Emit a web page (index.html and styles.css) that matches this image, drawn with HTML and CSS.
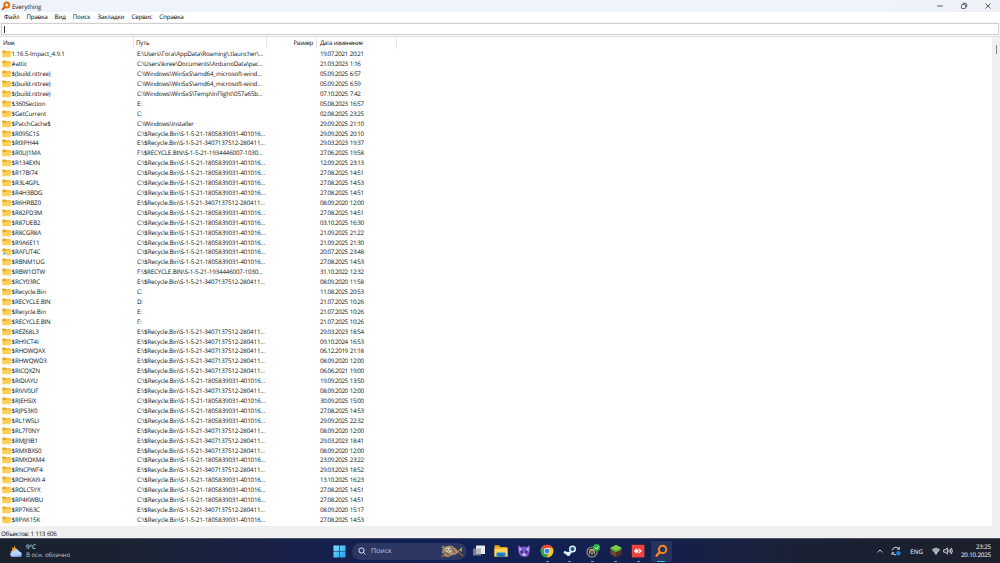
FILE: index.html
```
<!DOCTYPE html>
<html lang="ru">
<head>
    <meta charset="utf-8" />
    <title>Everything</title>
    <meta name="viewport" content="width=device-width, initial-scale=1">
    <link rel="stylesheet" href="styles.css">
</head>
<body>
    <div class="titlebar">
        <svg class="app-icon" viewBox="0 0 20 20">
            <circle cx="11.500" cy="8" r="5" fill="none" stroke="#e8700f" stroke-width="4" />
            <path d="M7.500 12L3.500 16.500" stroke="#d95f0c" stroke-width="4.200" stroke-linecap="round" />
        </svg>
        <span class="title">Everything</span>
        <svg class="window-button" viewBox="0 0 8 8"><path d="M1.200 4H6.800" /></svg>
        <svg class="window-button" viewBox="0 0 8 8"><rect x="1.500" y="2.500" width="4" height="4" rx=".8" /><path d="M2.800 1.300H5.500Q6.700 1.300 6.700 2.500V5.200" /></svg>
        <svg class="window-button" viewBox="0 0 8 8"><path d="M1.500 1.500L6.500 6.500M6.500 1.500L1.500 6.500" /></svg>
    </div>
    <div class="menu">
        <span>Файл</span>
        <span>Правка</span>
        <span>Вид</span>
        <span>Поиск</span>
        <span>Закладки</span>
        <span>Сервис</span>
        <span>Справка</span>
    </div>
    <div class="search-row">
        <div class="search-input"><i class="caret"></i></div>
    </div>

    <div class="content">
        <div class="list">
            <div class="row head">
                <div class="name">Имя</div>
                <div class="path">Путь</div>
                <div class="size">Размер</div>
                <div class="date">Дата изменения</div>
            </div>
            <div class="rows"></div>
        </div>
        <div class="scrollbar"><div class="thumb"></div></div>
    </div>
    <div class="status">Объектов: 1 113 606</div>

    <div class="taskbar">
        <div class="weather">
            <svg class="weather-icon" viewBox="0 0 14 14">
                <path d="M5.500 1L6.500 4L9 6L4 9L1.500 7.500L3.500 6L2.500 3.500L5 4Z" fill="#f39a2b" />
                <path d="M3.600 13a2.700 2.700 0 0 1-.4-5.300A3.800 3.800 0 0 1 10.300 7.500A2.800 2.800 0 0 1 10.600 13Z" fill="#b5d2f8" />
                <path d="M1.500 11.500Q6 12.500 13 10.500Q12.500 13 10.600 13H3.600Q2 13 1.500 11.500Z" fill="#769fe4" />
            </svg>
            <div class="weather-text">
                <p>9°C</p>
                <p class="sub">В осн. облачно</p>
            </div>
        </div>
        <div class="apps">
            <svg class="start" viewBox="0 0 13 13">
                <defs>
                    <linearGradient id="win" x1="0" y1="0" x2="1" y2="1"><stop offset="0" stop-color="#7de4fb" /><stop offset="1" stop-color="#1a9ff0" /></linearGradient>
                </defs>
                <path d="M.5.500H6.200V6.200H.5ZM6.800.500H12.500V6.200H6.800ZM.5 6.800H6.200V12.500H.5ZM6.800 6.800H12.500V12.500H6.800Z" fill="url(#win)" />
            </svg>
            <div class="task-search">
                <svg class="lens" viewBox="0 0 8 8"><circle cx="3.500" cy="3.500" r="2.600" /><path d="M5.400 5.400L7.400 7.400" /></svg>
                <span>Поиск</span>
                <svg class="sloth" viewBox="0 0 24 14">
                    <path d="M1 12Q14 13 22 4" fill="none" stroke="#8a6238" stroke-width="1.500" />
                    <path d="M14 4L23 12" stroke="#8b5e38" stroke-width="1.600" />
                    <path d="M2 8Q2 3 7 2Q12 0 16 5L19 8L15 11Q12 10 9 13Q3 13 2 8Z" fill="#a58a6c" />
                    <path d="M3 11L6 7L9 12M11 3L15 9" fill="none" stroke="#6d5440" stroke-width="1.200" />
                    <ellipse cx="8.500" cy="6" rx="3.200" ry="2.600" fill="#dfcfb5" />
                    <path d="M6.300 5.800H8M9.200 5.800H11M8.300 7.200H9" stroke="#46352a" stroke-width=".9" />
                    <path d="M1 4L4 1L4 4ZM19 6L22 3L22 8Z" fill="#81ad31" />
                </svg>
            </div>
            <div class="app">
                <svg viewBox="0 0 14 14"><rect x="1" y="4.500" width="8" height="7" rx=".6" fill="#777b86" /><rect x="4" y="1.500" width="9" height="8.500" rx=".6" fill="#e9eaec" /><path d="M4 4.500H9V10H4Z" fill="#b5b7bc" /></svg>
            </div>
            <div class="app">
                <svg viewBox="0 0 14 14"><path d="M.5 2Q.5 1.300 1.200 1.300H5L6.500 3H12.800Q13.500 3 13.500 3.700V12.500H.5Z" fill="#e6a51d" /><path d="M.5 4.500H13.500V12.500H.5Z" fill="#ffd65a" /><path d="M2.500 12.500V9.200Q2.500 8.500 3.200 8.500H10.800Q11.500 8.500 11.500 9.200V12.500Z" fill="#1684d8" /><path d="M4.500 10.500H9.500V12.500H4.500Z" fill="#2767a9" /></svg>
            </div>
            <div class="app">
                <svg viewBox="0 0 14 14"><path d="M1 1L4 3L7 2.500L10 3L13 1L12.500 8L11 12.500H4L1.500 9Z" fill="#7657c9" /><path d="M2 3L5 5L2.500 8ZM12 3L9 5L11.500 8Z" fill="#c0b2f5" /><path d="M3.500 6.500L6 8L4.500 9.500ZM10.500 6.500L8 8L9.500 9.500Z" fill="#231a48" /><path d="M5 11L7 8.500L9.500 11L7.500 12.500Z" fill="#d7b6ed" /></svg>
            </div>
            <div class="app open">
                <svg viewBox="0 0 14 14"><circle cx="7" cy="7" r="6.300" fill="#fbc116" /><path d="M7 7L1.540 3.850A6.300 6.300 0 0 1 12.460 3.850Z" fill="#e94335" /><path d="M7 7L1.540 3.850A6.300 6.300 0 0 0 7 13.300L9.700 8.600Z" fill="#2da14c" /><path d="M7 3.850H12.460A6.300 6.300 0 0 1 7 13.300L9.700 8.600Z" fill="#fbc116" /><circle cx="7" cy="7" r="3.200" fill="#fff" /><circle cx="7" cy="7" r="2.500" fill="#3b7ded" /></svg>
            </div>
            <div class="app open">
                <svg viewBox="0 0 14 14"><path d="M1 8L6 10L9 6" fill="none" stroke="#3c7cb0" stroke-width="3.400" /><path d="M1 8L6 10L9 6" fill="none" stroke="#e8eef5" stroke-width="2" /><circle cx="9.500" cy="5" r="2.800" fill="#14568f" stroke="#eef3f8" stroke-width="1.400" /><circle cx="5.200" cy="10" r="1.900" fill="#eef3f8" /></svg>
            </div>
            <div class="app open">
                <svg viewBox="0 0 14 14"><circle cx="6" cy="8" r="5" fill="#1c222b" stroke="#8c929b" stroke-width="1.200" /><path d="M3.800 10V7.500A2.200 2.200 0 0 1 8.200 7.500V10" fill="none" stroke="#e0c45a" stroke-width="1.200" /><path d="M6 6V11" stroke="#b9b3dc" /><circle cx="10.500" cy="3.500" r="3.500" fill="#2fb344" /><path d="M9 3.600L10.400 5L12.500 2.400" fill="none" stroke="#fff" stroke-width=".9" /></svg>
            </div>
            <div class="app open">
                <svg viewBox="0 0 14 14"><path d="M1.500 3.700L7 1L12.500 3.700V10.300L7 13.200L1.500 10.300Z" fill="#70482f" /><path d="M7 6.500L12.500 3.700V10.300L7 13.200Z" fill="#4c3023" /><path d="M1.500 3.700L7 1L12.500 3.700V5.200L11 6V7L9 6.800V8L7 7.800L5 8V6.500L3 6.700V5.500L1.500 5.300Z" fill="#55a833" /><path d="M1.500 3.700L7 1L12.500 3.700L7 6.400Z" fill="#7ccb4c" /></svg>
            </div>
            <div class="app open">
                <svg viewBox="0 0 14 14"><rect x=".8" y=".8" width="12.600" height="12.600" fill="#ef443b" /><path d="M5.300 4.500L7.800 7L5.300 9.500L2.800 7Z" fill="#fff" /><path d="M8 4.500L10.900 7L8 9.500L7.200 8.700L8.900 7L7.200 5.300Z" fill="#fff" /></svg>
            </div>
            <div class="app open active">
                <svg viewBox="0 0 14 14"><circle cx="8.600" cy="5.400" r="3.700" fill="none" stroke="#f5851f" stroke-width="2" /><path d="M5.700 8.400L2.500 11.700" stroke="#f5851f" stroke-width="2.400" stroke-linecap="round" /></svg>
            </div>
        </div>
        <div class="tray">
            <svg class="chevron" viewBox="0 0 8 8"><path d="M1.500 5.300L4 2.900L6.500 5.300" /></svg>
            <svg class="sync" viewBox="0 0 10 10"><path d="M1.200 4.500A3.700 3.700 0 0 1 8 3M8.300.9V3.200H6M1 9V6.800H3.300M1.200 7A3.700 3.700 0 0 0 5 8.800" /><circle cx="7.400" cy="7.200" r="2.200" /></svg>
            <span class="lang">ENG</span>
            <svg class="wifi" viewBox="0 0 10 8"><path d="M1 3Q5-.6 9 3L5 7.200Z" class="wifi-fan" /><path d="M1 3Q5-.6 9 3M2.300 4.400Q5 2 7.700 4.400M3.600 5.800Q5 4.600 6.400 5.800" /><circle cx="5" cy="6.800" r=".6" /></svg>
            <svg class="sound" viewBox="0 0 10 8"><path d="M.7 2.800H2.200L4.300 1V7L2.200 5.200H.7ZM5.700 2.800Q6.700 4 5.700 5.200M7 1.800Q8.500 4 7 6.200M8.200.8Q10.500 4 8.200 7.200" /></svg>
            <div class="clock">
                <p>23:25</p>
                <p>20.10.2025</p>
            </div>
        </div>
    </div>

    <script>
        const C = 'C:\\$Recycle.Bin\\S-1-5-21-1805839031-401016...';
        const E = 'E:\\$Recycle.Bin\\S-1-5-21-3407137512-280411...';
        const F = 'F:\\$RECYCLE.BIN\\S-1-5-21-1934446007-1030...';
        const items = [
            ['1.16.5-Impact_4.9.1', 'E:\\Users\\Гога\\AppData\\Roaming\\.tlauncher\\...', '19.07.2021 20:21'],
            ['#attic', 'C:\\Users\\kiree\\Documents\\ArduinoData\\pac...', '21.03.2023 1:16'],
            ['$(build.nttree)', 'C:\\Windows\\WinSxS\\amd64_microsoft-wind...', '05.09.2025 6:57'],
            ['$(build.nttree)', 'C:\\Windows\\WinSxS\\amd64_microsoft-wind...', '05.09.2025 6:59'],
            ['$(build.nttree)', 'C:\\Windows\\WinSxS\\Temp\\InFlight\\057a65b...', '07.10.2025 7:42'],
            ['$360Section', 'E:', '05.08.2023 16:57'],
            ['$GetCurrent', 'C:', '02.08.2025 23:25'],
            ['$PatchCache$', 'C:\\Windows\\Installer', '29.09.2025 21:10'],
            ['$R095C1S', C, '29.09.2025 20:10'],
            ['$R0IPH44', E, '29.03.2023 19:37'],
            ['$R0UJ1MA', F, '27.06.2025 19:58'],
            ['$R134EXN', C, '12.09.2025 23:13'],
            ['$R17BI74', C, '27.08.2025 14:51'],
            ['$R3L4GPL', C, '27.08.2025 14:53'],
            ['$R4H3BDG', C, '27.08.2025 14:51'],
            ['$R6HRBZ0', E, '08.09.2020 12:00'],
            ['$R82PD3M', C, '27.08.2025 14:51'],
            ['$R87UEB2', C, '03.10.2025 16:30'],
            ['$R8CGR8A', C, '21.09.2025 21:22'],
            ['$R9A6E11', C, '21.09.2025 21:30'],
            ['$RAFUT4C', C, '20.07.2025 23:48', 'link'],
            ['$RBNM1UG', C, '27.08.2025 14:53'],
            ['$RBW1OTW', F, '31.10.2022 12:32'],
            ['$RCY03RC', E, '08.09.2020 11:58'],
            ['$Recycle.Bin', 'C:', '11.08.2025 20:53'],
            ['$RECYCLE.BIN', 'D:', '21.07.2025 10:26'],
            ['$Recycle.Bin', 'E:', '21.07.2025 10:26'],
            ['$RECYCLE.BIN', 'F:', '21.07.2025 10:26'],
            ['$REZ68L3', E, '29.03.2023 18:54'],
            ['$RH9CT4I', E, '09.10.2024 16:53'],
            ['$RHOWQAX', E, '06.12.2019 21:18'],
            ['$RHWQWD3', E, '08.09.2020 12:00'],
            ['$RICQXZN', E, '06.06.2021 19:00'],
            ['$RIDIAYU', C, '19.09.2025 13:50'],
            ['$RIVV0UF', E, '08.09.2020 12:00'],
            ['$RJEHSIX', C, '30.09.2025 15:00'],
            ['$RJPS3K0', C, '27.08.2025 14:53'],
            ['$RL1W5LI', C, '29.09.2025 22:32'],
            ['$RL7F0NY', E, '08.09.2020 12:00'],
            ['$RMJJ9B1', E, '29.03.2023 18:41'],
            ['$RMXBXS0', E, '08.09.2020 12:00'],
            ['$RMXOKM4', C, '23.09.2025 23:22'],
            ['$RNCPWF4', E, '29.03.2023 18:52'],
            ['$ROHKAI9.4', C, '13.10.2025 16:23'],
            ['$ROLC5YX', C, '27.08.2025 14:51'],
            ['$RP4KWBU', C, '27.08.2025 14:51'],
            ['$RP7K63C', E, '08.09.2020 15:17'],
            ['$RPAK15K', C, '27.08.2025 14:53'],
            ['', '', '']
        ];
        const rows = document.querySelector('.rows');
        for (const [name, path, date, link] of items) {
            const arrow = link ? '<path d="M0 4H4V8H0Z" fill="#fff"/><path d="M.8 7L3 4.800M1.500 4.800H3V6.300" fill="none" stroke="#1979d1" stroke-width=".8"/>' : '';
            const item = `<div class="row">
                            <div class="name">
                                <svg class="folder" viewBox="0 0 9 8">
                                    <path d="M.3 1.200Q.3.400.8.400H3.300L4.200 1.300H8.200Q8.700 1.300 8.700 1.800V4H.3Z" fill="#eba91c"/>
                                    <path d="M.3 3H3.600L4.400 2.300H8.700V6.800Q8.700 7.300 8.200 7.300H.8Q.3 7.300.3 6.800Z" fill="#ffd05a"/>
                                    ${arrow}
                                </svg>
                                <span>${name}</span>
                            </div>
                            <div class="path">${path}</div>
                            <div class="size"></div>
                            <div class="date">${date}</div>
                          </div>`;
            rows.insertAdjacentHTML('beforeend', item);
        }
    </script>
</body>
</html>
```
FILE: styles.css
```
* {
    padding: 0;
    margin: 0;
    box-sizing: border-box;
}

body {
    width: 1000px;
    height: 563px;
    overflow: hidden;
    display: flex;
    flex-direction: column;
    background-color: white;
    color: #111;
    font-family: "Open Sans", "Noto Sans", sans-serif;
    font-size: 6.2px;
    line-height: 9px;
    text-rendering: geometricPrecision;
    white-space: nowrap;
}

svg {
    display: block;
    flex: none;
}

.titlebar {
    height: 12px;
    flex: none;
    display: flex;
    align-items: center;
    background: linear-gradient(90deg, #eff3fb 88%, #edf1f6);
    padding-right: 8.5px;
}

.app-icon {
    width: 10px;
    height: 10px;
    margin-left: 1px;
}

.title {
    flex: 1;
    margin-left: 1px;
    letter-spacing: -.1px;
}

.window-button {
    width: 8px;
    height: 8px;
    margin-left: 16px;
    fill: none;
    stroke: #333;
    stroke-width: .8;
}

.menu {
    height: 10px;
    flex: none;
    display: flex;
    gap: 7px;
    padding-left: 4px;
    line-height: 10px;
    letter-spacing: -.12px;
    color: #000;
}

.search-row {
    height: 14px;
    flex: none;
    padding: 1px;
    background-color: #f7f7f7;
}

.search-input {
    height: 12px;
    border: 1px solid #cfcfcf;
    background-color: white;
    padding: 2px;
}

.caret {
    display: block;
    width: 1px;
    height: 7px;
    background-color: #333;
}

.content {
    flex: 1;
    min-height: 0;
    display: flex;
    border-top: 1px solid #dfe0e4;
}

.list {
    flex: 1;
    overflow: hidden;
}

.row {
    display: grid;
    grid-template-columns: 134px 133px 50px 80px;
    height: 9.915px;
    line-height: 9.915px;
}

.head {
    height: 12px;
    line-height: 12px;
    margin-bottom: .3px;
    letter-spacing: -.4px;
}

.head > div {
    border-right: 1px solid #e6e6e6;
}

.head .name {
    padding-left: 3px;
    letter-spacing: -.5px;
}

.head .path {
    padding-left: 2px;
    letter-spacing: -.2px;
}

.name {
    display: flex;
    align-items: center;
    padding-left: 1.8px;
    letter-spacing: -.14px;
}

.folder {
    width: 9px;
    height: 8px;
    margin-right: .8px;
}

.path {
    padding-left: 3px;
    letter-spacing: -.15px;
}

.size {
    text-align: right;
    padding-right: 3px;
}

.date {
    padding-left: 3px;
    letter-spacing: -.38px;
    word-spacing: .8px;
}

.head .date {
    letter-spacing: -.54px;
}

.scrollbar {
    width: 8px;
    background-color: #f0f0f0;
    padding: 8px 3px 0;
}

.thumb {
    width: 1px;
    height: 9px;
    margin-left: 1px;
    background-color: #858585;
}

.status {
    height: 12px;
    flex: none;
    background-color: #f0f0f0;
    padding: 2.5px 0 0 1px;
    letter-spacing: -.4px;
    word-spacing: .7px;
}

.taskbar {
    height: 25px;
    flex: none;
    display: flex;
    align-items: center;
    border-top: 1px solid #4b5264;
    background: linear-gradient(90deg, #1a212e 0%, #1a2233 14%, #17204a 30%, #112056 45%, #14204c 66%, #1a2136 80%, #1c202b 100%);
    color: #fff;
}

.weather {
    width: 331px;
    display: flex;
    align-items: center;
    padding-left: 9px;
}

.weather-icon {
    width: 14px;
    height: 14px;
    margin-right: 3px;
}

.weather-text {
    line-height: 8.5px;
    letter-spacing: -.08px;
}

.sub {
    color: #c4c8d0;
}

.apps {
    display: flex;
    align-items: center;
}

.start {
    width: 13px;
    height: 13px;
    margin: 0 6.5px 0 1.5px;
}

.task-search {
    width: 115px;
    height: 17px;
    margin-right: 1px;
    display: flex;
    align-items: center;
    border-radius: 9px;
    background-color: #2b3662;
    color: #c6cad6;
    font-size: 7px;
    padding: 0 3px 0 6px;
}

.lens {
    width: 8px;
    height: 8px;
    fill: none;
    stroke: #e8eaf0;
}

.task-search span {
    flex: 1;
    margin-left: 5px;
}

.sloth {
    width: 24px;
    height: 14px;
}

.app {
    width: 21px;
    height: 21px;
    margin-right: 1.85px;
    padding: 3px 3.5px 0;
    border-radius: 2px;
    position: relative;
}

.app svg {
    width: 14px;
    height: 14px;
}

/* running indicator under the icon */
.open::after {
    content: "";
    position: absolute;
    left: 9px;
    bottom: 0;
    width: 3px;
    height: 1px;
    background-color: #9095a4;
}

.active {
    background-color: #25345e;
}

.active::after {
    left: 6.5px;
    width: 8px;
    background-color: #4cb5ee;
}

.tray {
    margin-left: auto;
    display: flex;
    align-items: center;
    padding-right: 9px;
}

.tray svg {
    fill: none;
    stroke: #e6e6e6;
    stroke-width: .9;
}

.chevron {
    width: 8px;
    height: 8px;
    margin-right: 7px;
}

.sync {
    width: 10px;
    height: 10px;
    margin-right: 9px;
}

.tray .sync circle {
    fill: #1683e6;
    stroke: none;
}

.lang {
    margin-right: 8px;
}

.tray .wifi {
    width: 10px;
    height: 8px;
    margin-right: 2px;
    stroke-width: .7;
}

.wifi-fan {
    fill: #8e929b;
    stroke: none;
}

.sound {
    width: 10px;
    height: 8px;
    margin-right: 8px;
}

.clock {
    text-align: right;
    line-height: 8.5px;
    letter-spacing: -.15px;
}
```
